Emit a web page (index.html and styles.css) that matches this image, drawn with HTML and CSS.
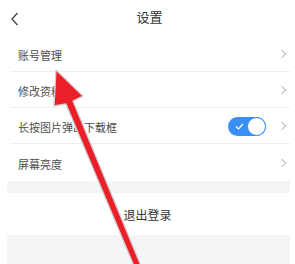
FILE: index.html
```html
<!DOCTYPE html>
<html lang="zh">
<head>
<meta charset="utf-8">
<link rel="stylesheet" href="styles.css">
</head>
<body>
<div class="screen">
  <header class="topbar">
    <svg class="back" width="8" height="14" viewBox="0 0 8 14"><path d="M6.5 1 L1 7 L6.5 13" fill="none" stroke="#444" stroke-width="1.3"/></svg>
    <div class="title">设置</div>
  </header>
  <ul class="list">
    <li class="row"><span class="label">账号管理</span><span class="chev"></span></li>
    <li class="row"><span class="label">修改资料</span><span class="chev"></span></li>
    <li class="row"><span class="label">长按图片弹出下载框</span>
      <span class="toggle"><svg class="tick" width="9" height="7" viewBox="0 0 9 7"><path d="M1 3.5 L3.5 6 L8 1" fill="none" stroke="#fff" stroke-width="1.2"/></svg><span class="knob"></span></span>
      <span class="chev"></span></li>
    <li class="row last"><span class="label">屏幕亮度</span><span class="chev"></span></li>
  </ul>
  <div class="gap"></div>
  <div class="logout">退出登录</div>
  <div class="rest"></div>
</div>
<svg class="arrow" width="295" height="264" viewBox="0 0 295 264">
  <polygon points="56,70 83,96 73,101 141,266 134,266 66,104 54,106" fill="#ea1f27" stroke="#d0d0d0" stroke-width="1.3" stroke-linejoin="round"/>
</svg>
</body>
</html>
```
FILE: styles.css
```css
html, body {
  margin: 0;
  padding: 0;
  background: #fff;
  width: 295px;
  height: 264px;
  overflow: hidden;
  font-family: "Noto Sans CJK SC", "Noto Sans", sans-serif;
}
.screen {
  margin: 0 5px 0 7px;
  height: 264px;
  display: flex;
  flex-direction: column;
}
.topbar {
  height: 36px;
  position: relative;
  display: flex;
  align-items: center;
  justify-content: center;
}
.back {
  position: absolute;
  left: 4px;
  top: 12px;
}
.title {
  font-size: 13px;
  color: #333;
  margin-left: 2px;
  margin-top: -3px;
}
.list {
  list-style: none;
  margin: 0;
  padding: 0;
}
.row {
  height: 35px;
  margin-left: 3px;
  border-bottom: 1px solid #eeeeee;
  display: flex;
  align-items: center;
  padding-left: 8px;
  padding-right: 2px;
}
.row.last {
  height: 37px;
  border-bottom: none;
}
.label {
  flex: 1;
  font-size: 11px;
  color: #4d4d4d;
  padding-top: 2px;
}
.chev {
  width: 5px;
  height: 5px;
  border-top: 1px solid #bbb;
  border-right: 1px solid #bbb;
  transform: rotate(45deg);
  margin-right: 3px;
}
.toggle {
  width: 38px;
  height: 19px;
  border-radius: 10px;
  background: #3a8ff5;
  position: relative;
  margin-right: 13px;
  margin-top: 1px;
  display: flex;
  align-items: center;
}
.tick {
  margin-left: 7px;
}
.knob {
  position: absolute;
  right: 0;
  top: 0;
  width: 17px;
  height: 17px;
  border-radius: 50%;
  background: #fff;
  border: 1px solid #3a8ff5;
}
.gap {
  height: 12px;
  background: #f4f5f7;
}
.logout {
  height: 41px;
  display: flex;
  align-items: center;
  justify-content: center;
  font-size: 12px;
  color: #333;
  padding-right: 2px;
  padding-top: 1px;
}
.rest {
  flex: 1;
  background: #f4f5f7;
}
.arrow {
  position: absolute;
  left: 0;
  top: 0;
}
```
